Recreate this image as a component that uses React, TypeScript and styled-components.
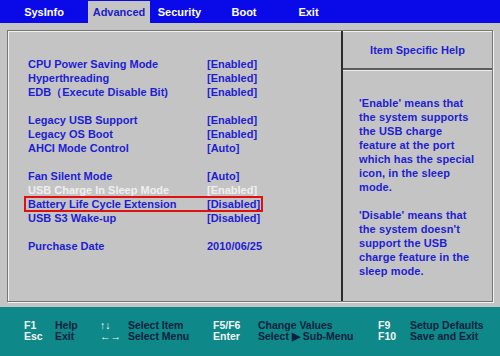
import React from 'react'
import styled, { createGlobalStyle } from 'styled-components'

const GlobalStyle = createGlobalStyle`
html, body {
    margin:0;
    padding:0;
    background:#c4c4c4;
}
`

const Screen = styled.div`
width:500px;
height:356px;
overflow:hidden;
display:flex;
flex-direction:column;
background-color:#c4c4c4;
font-family:"Liberation Sans", Arial, sans-serif;
font-weight:bold;
`

const TopBar = styled.div`
height:23px;
flex-shrink:0;
display:flex;
background-color:#0a0ae8;
`

const Tab = styled.div<{ $w: number, $active?: boolean }>`
width:${p => p.$w}px;
display:flex;
align-items:center;
justify-content:center;
margin-top:${p => p.$active ? '1px' : '0'};
font-size:11px;
color:${p => p.$active ? '#1c1cc8' : '#ffffff'};
background-color:${p => p.$active ? '#c4c4c4' : 'transparent'};
`

const Main = styled.div`
flex:1;
padding:7px 7px 5px 7px;
display:flex;
`

const Frame = styled.div`
flex:1;
display:grid;
grid-template-columns:333px 1fr;
border:1px solid #767676;
box-shadow:inset 1px 1px 0 #f2f2f2, 1px 1px 0 #f2f2f2;
`

const LeftPanel = styled.div`
padding:26px 0 0 20px;
`

const RightPanel = styled.div`
display:flex;
flex-direction:column;
border-left:2px solid #2c2c2c;
`

const HelpHeader = styled.div`
height:37px;
display:flex;
align-items:center;
justify-content:center;
font-size:11px;
color:#1e1ed4;
border-bottom:2px solid #5c5c5c;
box-shadow:0 1px 0 #ececec;
`

const HelpBody = styled.div`
padding:26px 0 0 16px;
font-size:11px;
line-height:14px;
color:#1e1ed4;
letter-spacing:0.1px;
`

const HelpLine = styled.div`
height:14px;
white-space:nowrap;
`

const Row = styled.div<{ $dim?: boolean, $selected?: boolean }>`
position:relative;
display:grid;
grid-template-columns:179px auto;
width:max-content;
height:14px;
line-height:14px;
font-size:11px;
white-space:nowrap;
color:${p => p.$dim ? '#efefef' : '#1e1ed4'};
&::after{
    content:'';
    display:${p => p.$selected ? 'block' : 'none'};
    position:absolute;
    top:-1px;
    bottom:-1px;
    left:-4px;
    right:-3px;
    border:2px solid #e01010;
}
`

const Spacer = styled.div`
height:14px;
`

const Footer = styled.div`
height:49px;
flex-shrink:0;
box-sizing:border-box;
padding:13px 0 0 24px;
background-color:#0e8888;
display:grid;
grid-template-columns:31px 45px 28px 85px 45px 120px 32px auto;
grid-auto-rows:11px;
font-size:10.5px;
line-height:11px;
white-space:nowrap;
`

const Key = styled.div`
color:#f4f4f4;
`

const Desc = styled.div`
color:#0c1f40;
`

type Item = { label?: string, value?: string, dim?: boolean, selected?: boolean }

const items: Item[] = [
    { label: 'CPU Power Saving Mode', value: '[Enabled]' },
    { label: 'Hyperthreading', value: '[Enabled]' },
    { label: 'EDB（Execute Disable Bit)', value: '[Enabled]' },
    {},
    { label: 'Legacy USB Support', value: '[Enabled]' },
    { label: 'Legacy OS Boot', value: '[Enabled]' },
    { label: 'AHCI Mode Control', value: '[Auto]' },
    {},
    { label: 'Fan Silent Mode', value: '[Auto]' },
    { label: 'USB Charge In Sleep Mode', value: '[Enabled]', dim: true },
    { label: 'Battery Life Cycle Extension', value: '[Disabled]', selected: true },
    { label: 'USB S3 Wake-up', value: '[Disabled]' },
    {},
    { label: 'Purchase Date', value: '2010/06/25' },
]

const helpLines = [
    "'Enable' means that",
    'the system supports',
    'the USB charge',
    'feature at the port',
    'which has the special',
    'icon, in the sleep',
    'mode.',
    '',
    "'Disable' means that",
    "the system doesn't",
    'support the USB',
    'charge feature in the',
    'sleep mode.',
]

const tabs = [
    { name: 'SysInfo', w: 88 },
    { name: 'Advanced', w: 62, active: true },
    { name: 'Security', w: 59 },
    { name: 'Boot', w: 70 },
    { name: 'Exit', w: 59 },
]

// key / description pairs, two lines
const footerRows = [
    ['F1', 'Help', '↑↓', 'Select Item', 'F5/F6', 'Change Values', 'F9', 'Setup Defaults'],
    ['Esc', 'Exit', '←→', 'Select Menu', 'Enter', 'Select ▶ Sub-Menu', 'F10', 'Save and Exit'],
]

const App = () => {
    return (
        <>
            <GlobalStyle />
            <Screen>
                <TopBar>
                    {tabs.map(tab =>
                        <Tab key={tab.name} $w={tab.w} $active={tab.active}>{tab.name}</Tab>)}
                </TopBar>
                <Main>
                    <Frame>
                        <LeftPanel>
                            {items.map((item, i) => item.label
                                ? <Row key={i} $dim={item.dim} $selected={item.selected}>
                                    <span>{item.label}</span>
                                    <span>{item.value}</span>
                                </Row>
                                : <Spacer key={i} />)}
                        </LeftPanel>
                        <RightPanel>
                            <HelpHeader>Item Specific Help</HelpHeader>
                            <HelpBody>
                                {helpLines.map((line, i) => <HelpLine key={i}>{line}</HelpLine>)}
                            </HelpBody>
                        </RightPanel>
                    </Frame>
                </Main>
                <Footer>
                    {footerRows.map((row, r) => row.map((text, i) => i % 2 === 0
                        ? <Key key={r + '-' + i}>{text}</Key>
                        : <Desc key={r + '-' + i}>{text}</Desc>))}
                </Footer>
            </Screen>
        </>
    )
}

export default App
